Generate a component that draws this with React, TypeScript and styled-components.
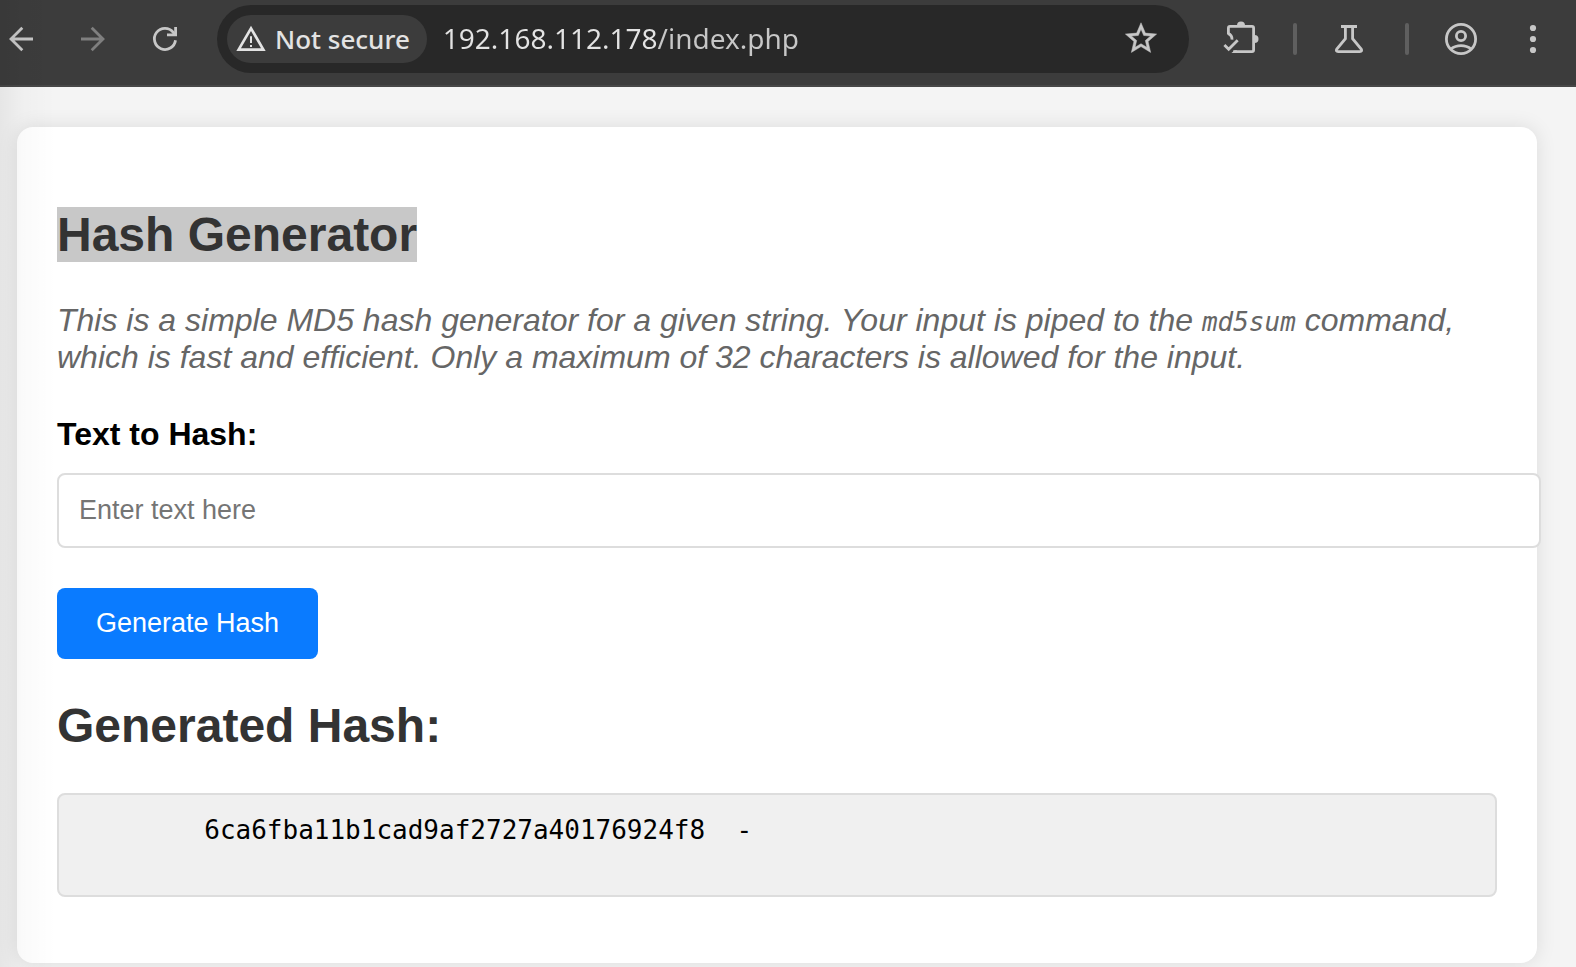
import React, { useState } from "react";
import styled, { createGlobalStyle } from "styled-components";

const GlobalStyle = createGlobalStyle`
  body {
    margin: 0;
    background: #f4f4f4;
    font-family: "Liberation Sans", Arial, sans-serif;
  }
`;

const Window = styled.div`
  position: relative;
  display: flex;
  flex-direction: column;
  min-height: 100vh;
`;

const EdgeShade = styled.div`
  position: absolute;
  inset: 0 auto 0 0;
  width: 56px;
  background: linear-gradient(90deg, rgba(0, 0, 0, 0.06), rgba(0, 0, 0, 0.02) 40%, transparent);
  pointer-events: none;
`;

const Toolbar = styled.header`
  display: flex;
  align-items: center;
  gap: 32px;
  padding: 5px 23px 12px 1px;
  background: #3c3c3c;
  border-bottom: 2px solid #474747;
  font-family: "Noto Sans", sans-serif;
`;

const Group = styled.div`
  display: flex;
  align-items: center;
  gap: 32px;
`;

const EndGroups = styled.div`
  display: flex;
  align-items: center;
  gap: 36px;
`;

const IconButton = styled.button`
  display: flex;
  padding: 0;
  border: 0;
  background: none;
  color: #c7c7c7;

  &:disabled {
    color: #7f7f7f;
  }
`;

const Icon = styled.svg.attrs({ viewBox: "0 0 40 40", "aria-hidden": true })`
  display: block;
  width: 40px;
  height: 40px;
  fill: none;
  stroke: currentColor;
  stroke-width: 2.8;
`;

const SolidIcon = styled.svg<{ $size: number }>`
  display: block;
  flex: none;
  width: ${(p) => p.$size}px;
  height: ${(p) => p.$size}px;
  fill: currentColor;
`;

const Divider = styled.span`
  width: 4px;
  height: 32px;
  border-radius: 2px;
  background: #5f5f5f;
`;

const AddressBar = styled.div`
  display: flex;
  flex: 1;
  align-items: center;
  min-width: 0;
  height: 68px;
  box-sizing: border-box;
  padding: 0 28px 0 10px;
  border-radius: 34px;
  background: #282828;
`;

const SecurityChip = styled.button`
  display: flex;
  flex: none;
  align-items: center;
  gap: 8px;
  height: 48px;
  padding: 0 17px 0 8px;
  border: 0;
  border-radius: 24px;
  background: #3c3c3c;
  color: #e3e3e3;
  font: 500 26px/36px "Noto Sans", sans-serif;
  white-space: nowrap;
`;

/* The host part of the address is drawn brighter than the path. */
const AddressInput = styled.input`
  flex: 1;
  min-width: 0;
  padding: 0 0 2px 16px;
  border: 0;
  outline: 0;
  background: linear-gradient(90deg, #e3e3e3 230px, #c7c7c7 230px);
  background-clip: text;
  -webkit-background-clip: text;
  -webkit-text-fill-color: transparent;
  color: #e3e3e3;
  font: 28px/40px "Noto Sans", sans-serif;
`;

const Page = styled.main`
  padding: 40px 39px 0 17px;
`;

const Card = styled.section`
  padding: 80px 40px 66px;
  border-radius: 16px;
  background: #fff;
  box-shadow: 0 0 20px rgba(0, 0, 0, 0.1);
`;

const Heading = styled.h2`
  margin: 0 0 40px;
  color: #333;
  font-size: 48px;
  line-height: normal;
`;

const Highlight = styled.mark`
  display: inline-block;
  background: #c8c8c8;
  color: inherit;
  vertical-align: top;
`;

const Intro = styled.p`
  margin: 0 0 40px;
  color: #666;
  font-size: 32px;
  font-style: italic;
  line-height: 37px;
`;

const Command = styled.code`
  font-family: "DejaVu Sans Mono", monospace;
  font-size: 26px;
  line-height: 1;
`;

const HashForm = styled.form`
  margin-bottom: 39px;
`;

const Label = styled.label`
  display: block;
  margin-bottom: 20px;
  font-size: 32px;
  font-weight: bold;
  line-height: 37px;
`;

const TextField = styled.input`
  display: block;
  width: 100%;
  height: 31px;
  margin-bottom: 40px;
  padding: 20px;
  border: 2px solid #ddd;
  border-radius: 8px;
  background: #fff;
  font: 27px "Liberation Sans", Arial, sans-serif;

  &::placeholder {
    color: #757575;
  }
`;

const SubmitButton = styled.button`
  display: block;
  padding: 20px 39px;
  border: 0;
  border-radius: 8px;
  background: #0a7bff;
  color: #fff;
  font: 27px/31px "Liberation Sans", Arial, sans-serif;
`;

const HashOutput = styled.pre`
  margin: 0;
  padding: 20px;
  border: 2px solid #ddd;
  border-radius: 8px;
  background: #f0f0f0;
  font: 26px/30px "DejaVu Sans Mono", monospace;
`;

export default function App() {
  const [address, setAddress] = useState("192.168.112.178/index.php");
  const [text, setText] = useState("");
  const hash = "6ca6fba11b1cad9af2727a40176924f8  -";

  return (
    <Window>
      <GlobalStyle />
      <Toolbar>
        <Group>
          <IconButton aria-label="Back">
            <Icon>
              <path d="M21.3 8.7 10 20l11.3 11.3M10 20h22" />
            </Icon>
          </IconButton>
          <IconButton aria-label="Forward" disabled>
            <Icon>
              <path d="M18.7 8.7 30 20 18.7 31.3M30 20H8" />
            </Icon>
          </IconButton>
          <IconButton aria-label="Reload">
            <Icon>
              <path d="M30.5 21.3A10.6 10.6 0 1 1 28.3 13.3L30 15.6" />
              <path d="M30.6 8v7.8H22" />
            </Icon>
          </IconButton>
        </Group>

        <AddressBar>
          <SecurityChip>
            <SolidIcon $size={32} viewBox="0 0 24 24" aria-hidden>
              <path d="M12 5.99 19.53 19H4.47L12 5.99M12 2 1 21h22L12 2zm.75 14.5h-1.5V18h1.5v-1.5zm0-6.5h-1.5v5h1.5v-5z" />
            </SolidIcon>
            Not secure
          </SecurityChip>
          <AddressInput
            aria-label="Address"
            spellCheck={false}
            value={address}
            onChange={(e) => setAddress(e.target.value)}
          />
          <IconButton aria-label="Bookmark this page">
            <SolidIcon $size={40} viewBox="-0.8 -0.4 25.6 25.6" aria-hidden>
              <path
                d="m22 9.24-7.19-.62L12 2 9.19 8.63 2 9.24l5.46 4.73L5.82 21 12 17.27 18.18 21l-1.63-7.03L22 9.24zM12 15.4l-3.76 2.27 1-4.28-3.32-2.88 4.38-.38L12 6.1l1.71 4.04 4.38.38-3.32 2.88 1 4.28L12 15.4z"
                stroke="currentColor"
                strokeWidth="0.3"
              />
            </SolidIcon>
          </IconButton>
        </AddressBar>

        <EndGroups>
          <Group>
            <IconButton aria-label="Extensions">
              <Icon>
                <path d="M7.4 15.5V9q0-1.6 1.6-1.6h22q1.6 0 1.6 1.6v22q0 1.6-1.6 1.6H12.2" />
                <path d="M7.2 14.6q4 1.4 3.8 6" />
                <path d="m3.4 26 4.3 4.3 9-9" />
                <path d="M16 6.5a4 4 0 0 1 8 0zM33.5 16a4 4 0 0 1 0 8z" fill="currentColor" stroke="none" />
                <path d="m10.4 34 3.4-2.8h2V34z" fill="currentColor" stroke="none" />
              </Icon>
            </IconButton>
            <Divider />
            <IconButton aria-label="Experiments">
              <Icon>
                <path d="M12 7.5h16M16.4 7.5v12.2L7.8 30q-1.4 2.6 1.4 2.6h21.6q2.8 0 1.4-2.6l-8.6-10.3V7.5" />
              </Icon>
            </IconButton>
          </Group>
          <Group>
            <Divider />
            <IconButton aria-label="Profile">
              <Icon>
                <circle cx="20" cy="20" r="14.6" />
                <circle cx="20" cy="17" r="4.6" />
                <path d="M9.8 30q4.4-3.4 10.2-3.4T30.2 30" />
              </Icon>
            </IconButton>
            <IconButton aria-label="Menu">
              <SolidIcon $size={40} viewBox="0 0 40 40" aria-hidden>
                <circle cx="20" cy="9" r="3.1" />
                <circle cx="20" cy="20" r="3.1" />
                <circle cx="20" cy="31" r="3.1" />
              </SolidIcon>
            </IconButton>
          </Group>
        </EndGroups>
      </Toolbar>

      <Page>
        <Card>
          <Heading>
            <Highlight>Hash Generator</Highlight>
          </Heading>
          <Intro>
            This is a simple MD5 hash generator for a given string. Your input is piped to the{" "}
            <Command>md5sum</Command> command, which is fast and efficient. Only a maximum of 32
            characters is allowed for the input.
          </Intro>
          <HashForm onSubmit={(e) => e.preventDefault()}>
            <Label htmlFor="text">Text to Hash:</Label>
            <TextField
              id="text"
              maxLength={32}
              placeholder="Enter text here"
              value={text}
              onChange={(e) => setText(e.target.value)}
            />
            <SubmitButton type="submit">Generate Hash</SubmitButton>
          </HashForm>
          <Heading>Generated Hash:</Heading>
          <HashOutput>{`        ${hash}\n        `}</HashOutput>
        </Card>
      </Page>
      <EdgeShade />
    </Window>
  );
}
